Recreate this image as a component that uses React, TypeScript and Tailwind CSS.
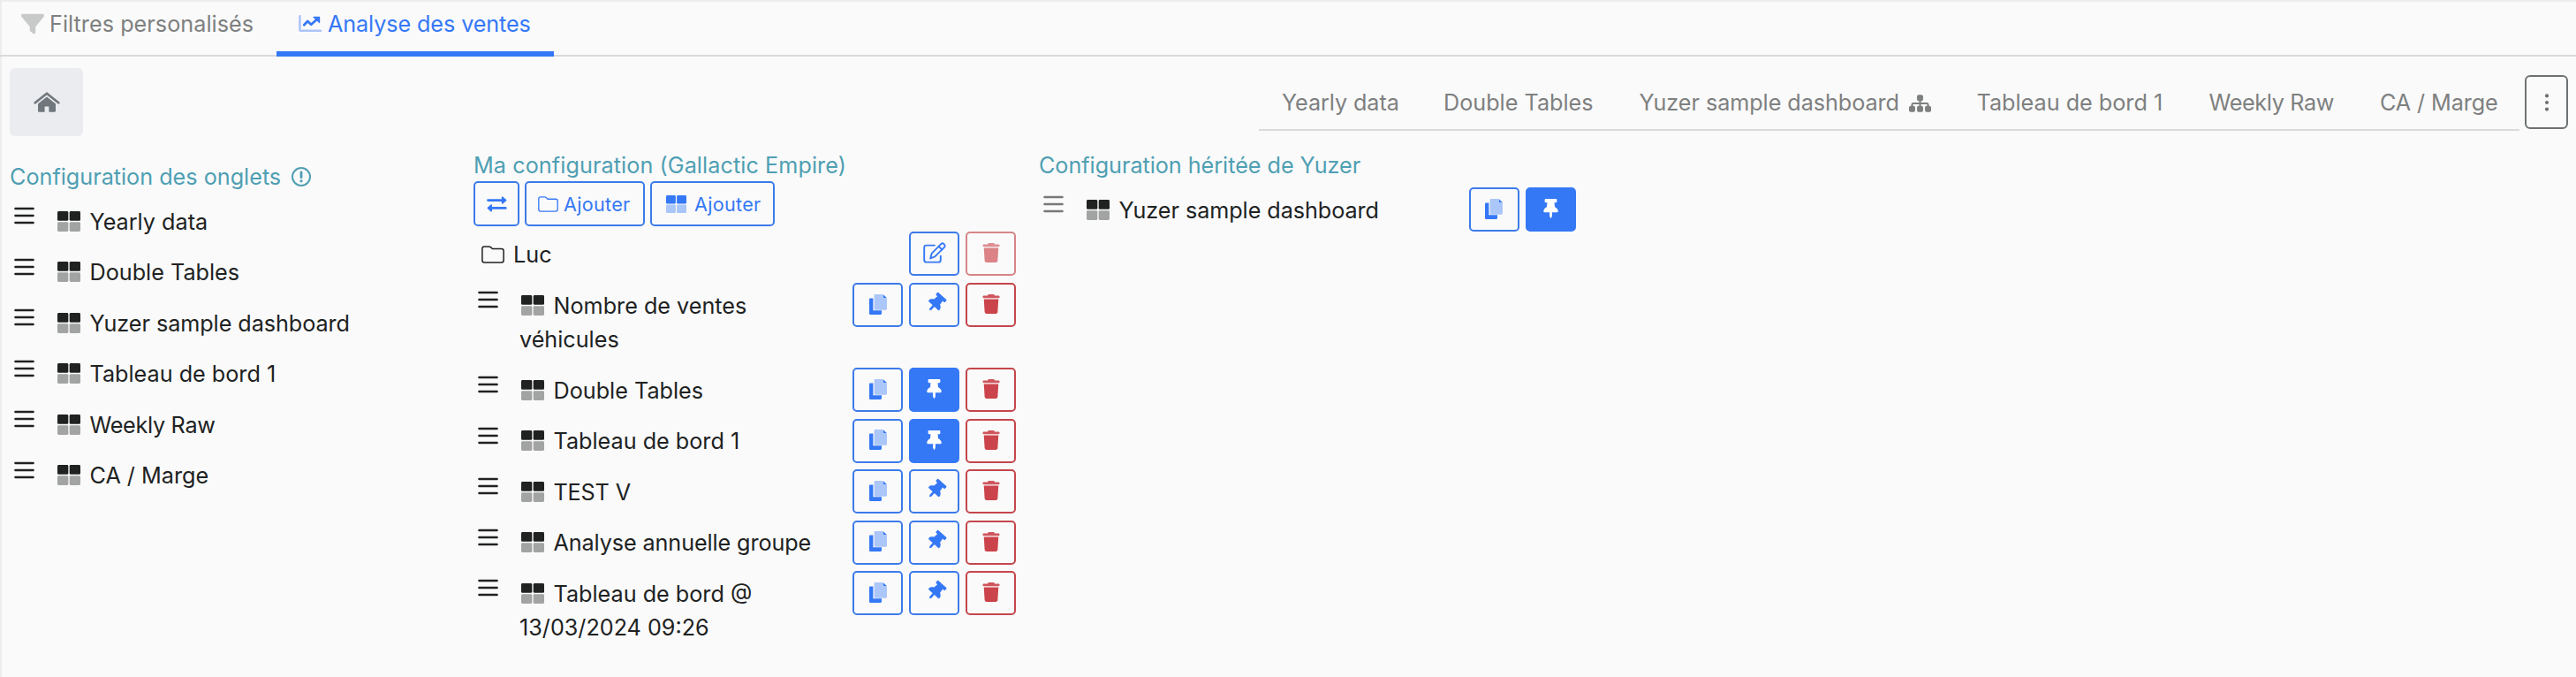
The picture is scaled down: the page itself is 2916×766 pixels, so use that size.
import React from "react";
import clsx from "clsx";
import { FaFilter, FaSitemap } from "react-icons/fa6";
import { FaThumbtack } from "react-icons/fa";

function GridIcon({ className }: { className?: string }) {
  return (
    <svg viewBox="0 0 26 23" preserveAspectRatio="none" className={className} fill="currentColor">
      <rect x="0" y="0" width="12.3" height="10.8" rx="1.4" />
      <rect x="13.7" y="0" width="12.3" height="10.8" rx="1.4" />
      <g opacity="0.4">
        <rect x="0" y="12.2" width="12.3" height="10.8" rx="1.4" />
        <rect x="13.7" y="12.2" width="12.3" height="10.8" rx="1.4" />
      </g>
    </svg>
  );
}

function FolderIcon({ className }: { className?: string }) {
  return (
    <svg viewBox="0 0 26 20" className={className} fill="none" stroke="currentColor" strokeWidth="1.5" strokeLinejoin="round">
      <path d="M3.2 0.9H8.6C9.3 0.9 9.9 1.2 10.4 1.6L12.4 3.5H22.6C24 3.5 25.1 4.5 25.1 5.8V16.6C25.1 18 24 19.1 22.6 19.1H3.2C1.9 19.1 0.9 18 0.9 16.6V3.3C0.9 2 1.9 0.9 3.2 0.9Z" />
    </svg>
  );
}

function BarsIcon({ className }: { className?: string }) {
  return (
    <svg viewBox="0 0 23 20" className={className} stroke="currentColor" strokeWidth="2.4" strokeLinecap="round">
      <path d="M1.4 2H21.6M1.4 10H21.6M1.4 18H21.6" />
    </svg>
  );
}

function EditIcon() {
  return (
    <svg viewBox="0 0 26 24" className="h-6 w-[26px]" fill="none" stroke="currentColor" strokeWidth="1.9" strokeLinecap="round" strokeLinejoin="round">
      <path d="M13 3.6H3.6C2.2 3.6 1.2 4.6 1.2 6V20.2C1.2 21.6 2.2 22.6 3.6 22.6H17.4C18.8 22.6 19.8 21.6 19.8 20.2V15.6" />
      <path d="M20.2 2.1C21.2 1.1 22.6 1.1 23.6 2.1C24.9 3.3 24.9 4.8 23.9 5.8L13.2 16.4L8.2 18.4L9.8 12.6Z" />
      <path d="M17.6 4.8L21.3 8.4" />
    </svg>
  );
}

function TrashIcon() {
  return (
    <svg viewBox="0 0 448 512" className="h-[22px] w-5" fill="currentColor">
      <path opacity="0.9" d="M135.2 17.7L128 32H32C14.3 32 0 46.3 0 64S14.3 96 32 96H416c17.7 0 32-14.3 32-32s-14.3-32-32-32H320l-7.2-14.3C307.4 6.8 296.3 0 284.2 0H163.8c-12.1 0-23.2 6.8-28.6 17.7z" />
      <path d="M32 128L53.2 467c1.6 25.3 22.6 45 47.9 45H346.9c25.3 0 46.3-19.7 47.9-45L416 128z" />
    </svg>
  );
}

function CopyIcon() {
  return (
    <svg viewBox="0 0 20 23" className="h-[23px] w-5" fill="currentColor">
      <path d="M1 4.6H4.4V18.2H14V21.6C14 22.4 13.5 23 12.8 23H1C0.4 23 0 22.5 0 21.8V5.8C0 5.1 0.4 4.6 1 4.6Z" />
      <path opacity="0.4" d="M6.6 0H15.2V3.2C15.2 4 15.7 4.6 16.6 4.6H20V16.6C20 17.3 19.5 17.8 18.8 17.8H6.8C6.1 17.8 5.6 17.3 5.6 16.6V1.2C5.6 0.5 6 0 6.6 0Z" />
      <path d="M15.6 0L20 4.2H16.6C16 4.2 15.6 3.8 15.6 3.2Z" />
    </svg>
  );
}

function ChartIcon() {
  return (
    <svg viewBox="0 0 26 20" className="h-5 w-[26px]" fill="none">
      <path d="M1.4 1.2V16.2C1.4 17.2 2 17.8 3 17.8H24.8" stroke="#aec5fa" strokeWidth="2.6" strokeLinecap="round" />
      <path d="M6.2 11.2L10.2 7L14.2 10.8L20.6 4.9" stroke="#3578f6" strokeWidth="2.7" strokeLinejoin="round" strokeLinecap="round" />
      <path d="M17 1.8H23.6Q24.2 1.8 24.2 2.4V8.8Q24 9.6 23.3 9L16.6 2.8Q16.2 2 17 1.8Z" fill="#3578f6" />
    </svg>
  );
}

function SwapIcon() {
  return (
    <svg viewBox="0 0 23 18" className="h-[18px] w-[23px]" fill="none" stroke="currentColor" strokeWidth="2.6" strokeLinecap="round" strokeLinejoin="round">
      <path d="M1.4 4.6H20M3 13.4H21.4" />
      <path d="M17.6 1.2V8L21.6 4.6ZM5.2 10V16.8L1.4 13.4Z" fill="currentColor" strokeWidth="1.6" />
    </svg>
  );
}

function HomeIcon() {
  return (
    <svg viewBox="0 0 30 23" className="h-[23px] w-[30px] text-[#70777d]">
      <path d="M1.8 12.3L15 1.7L28.2 12.3" fill="none" stroke="currentColor" strokeWidth="2.7" strokeLinecap="round" strokeLinejoin="round" />
      <path d="M15 5.6L25 13.6V21.4Q25 22.8 23.6 22.8H17.4V16.4H12.6V22.8H6.4Q5 22.8 5 21.4V13.6Z" fill="currentColor" />
    </svg>
  );
}

function InfoIcon() {
  return (
    <svg viewBox="0 0 22 22" className="h-[22px] w-[22px]" fill="none" stroke="currentColor">
      <circle cx="11" cy="11" r="10" strokeWidth="2" />
      <path d="M11 6V11.8" strokeWidth="2.8" strokeLinecap="round" />
      <circle cx="11" cy="15.8" r="1" fill="currentColor" strokeWidth="1.2" />
    </svg>
  );
}

function DotsIcon() {
  return (
    <svg viewBox="0 0 6 20" className="h-5 w-1.5" fill="currentColor">
      <circle cx="3" cy="2.4" r="2.1" />
      <circle cx="3" cy="10" r="2.1" />
      <circle cx="3" cy="17.6" r="2.1" />
    </svg>
  );
}

const squareButton = "flex h-[50px] w-[57px] items-center justify-center rounded-[5px] border-2";

function CopyButton() {
  return (
    <button className={clsx(squareButton, "border-[#3d7be9] pb-0.5 text-[#3578f6]")}>
      <CopyIcon />
    </button>
  );
}

function PinButton({ pinned }: { pinned?: boolean }) {
  return (
    <button
      className={clsx(
        squareButton,
        pinned ? "border-[#3578f6] bg-[#3578f6] pb-0.5 text-white" : "border-[#3d7be9] pb-1 pl-[3px] text-[#3578f6]"
      )}
    >
      <FaThumbtack className={clsx("h-[22px] w-[17px]", !pinned && "rotate-[42deg]")} />
    </button>
  );
}

function TrashButton({ disabled }: { disabled?: boolean }) {
  return (
    <button className={clsx(squareButton, "border-[#c4474c] pb-0.5 text-[#cb444b]", disabled && "opacity-65")}>
      <TrashIcon />
    </button>
  );
}

interface RowProps {
  label: string;
  handle?: string;
  height?: string;
  tracking?: string;
  children?: React.ReactNode;
}

function Row({ label, handle = "text-[#202222]", height = "h-[57.5px]", tracking, children }: RowProps) {
  return (
    <li className={clsx("flex items-start", height)}>
      <div className="w-[52px] shrink-0 pt-[9px] pl-[4.5px]">
        <BarsIcon className={clsx("h-5 w-[23px]", handle)} />
      </div>
      <p className={clsx("w-[350px] pt-[6.5px]", tracking)}>
        <GridIcon className="mr-[10.5px] ml-[2px] inline-block h-[23px] w-[26px] align-[-2px]" />
        {label}
      </p>
      <div className="ml-auto flex gap-[7px]">{children}</div>
    </li>
  );
}

const title = "whitespace-nowrap text-[#4f9fb3]";

const tabs = [
  { label: "Yearly data", box: "w-[184px] pl-[26px]", tracking: "tracking-[-0.08px]" },
  { label: "Double Tables", box: "w-[220.5px] pl-[25px]", tracking: "" },
  { label: "Yuzer sample dashboard", box: "w-[382px] pl-[26px]", tracking: "tracking-[-0.06px]", shared: true },
  { label: "Tableau de bord 1", box: "w-[263px] pl-[26px]", tracking: "" },
  { label: "Weekly Raw", box: "w-[194px] pl-[26px]", tracking: "tracking-[-0.35px]" },
  { label: "CA / Marge", box: "w-[183.5px] pl-[25.5px]", tracking: "tracking-[-0.1px]" },
];

const ownDashboards = [
  { label: "Nombre de ventes véhicules", height: "h-[96px]" },
  { label: "Double Tables", pinned: true },
  { label: "Tableau de bord 1", pinned: true },
  { label: "TEST V", tracking: "tracking-[-0.15px]" },
  { label: "Analyse annuelle groupe", tracking: "tracking-[-0.1px]" },
  { label: "Tableau de bord @ 13/03/2024 09:26", height: "h-[96px]" },
];

export default function App() {
  return (
    <div className="h-[766px] w-[2916px] overflow-hidden bg-[#fafafa] font-['Inter',sans-serif] text-[25.2px] leading-[38.8px] text-[#202222] shadow-[inset_2px_2px_0_#ededed]">
      <nav className="flex h-16 bg-[linear-gradient(#d8dadb,#d8dadb)] bg-[length:100%_2px] bg-bottom bg-no-repeat">
        <div className="flex w-[313px] gap-[6px] pt-2 pl-6 text-[#7e8080]">
          <FaFilter className="mt-1.5 h-[26px] w-[26px] text-[#c8caca]" />
          <span className="tracking-[0.04px] whitespace-nowrap">Filtres personalisés</span>
        </div>
        <div className="flex w-[314px] gap-[7px] border-b-6 border-[#3578f6] pt-2 pl-[25px] text-[#3578f6]">
          <div className="pt-[9px]">
            <ChartIcon />
          </div>
          <span className="tracking-[-0.1px] whitespace-nowrap">Analyse des ventes</span>
        </div>
      </nav>

      <div className="flex h-[90px] items-start justify-between pt-[13px] pr-[9px] pl-[11px]">
        <button className="flex h-[77px] w-[83px] items-center justify-center rounded-md bg-[#ebecef]">
          <HomeIcon />
        </button>
        <div className="flex items-start gap-[6px]">
          <div className="flex h-[71px] border-b-2 border-[#d8dadb] pt-[19.5px] text-[#7e8080]">
            {tabs.map((t) => (
              <div key={t.label} className={clsx("flex gap-[11px] whitespace-nowrap", t.box, t.tracking)}>
                {t.label}
                {t.shared && <FaSitemap className="mt-[8px] h-[24px] w-[25px]" />}
              </div>
            ))}
          </div>
          <button className="mt-2 flex h-[61px] w-[49px] items-center justify-center rounded-md border-2 border-[#6d7173] text-[#6d7173]">
            <DotsIcon />
          </button>
        </div>
      </div>

      <main className="flex items-start pl-[11px]">
        <section className="w-[525px] pt-[27px]">
          <h2 className={clsx(title, "flex h-[44px] gap-[12px]")}>
            Configuration des onglets
            <span className="pt-[8px]">
              <InfoIcon />
            </span>
          </h2>
          <ul>
            <Row label="Yearly data" />
            <Row label="Double Tables" />
            <Row label="Yuzer sample dashboard" tracking="tracking-[-0.06px]" />
            <Row label="Tableau de bord 1" />
            <Row label="Weekly Raw" tracking="tracking-[-0.3px]" />
            <Row label="CA / Marge" />
          </ul>
        </section>

        <section className="w-[614px] pt-[14px]">
          <h2 className={clsx(title, "h-[37px] tracking-[0.08px]")}>Ma configuration (Gallactic Empire)</h2>
          <div className="flex h-[57px] gap-1.5 text-[21.6px] tracking-[0.3px] text-[#3578f6]">
            <button className="flex h-[51px] w-[52px] items-center justify-center rounded-[5px] border-2 border-[#3d7be9]">
              <SwapIcon />
            </button>
            <button className="flex h-[51px] w-[136px] items-center gap-[6px] rounded-[5px] border-2 border-[#3d7be9] pl-[13px]">
              <FolderIcon className="h-[18px] w-[23px]" />
              <span className="pt-[2px]">Ajouter</span>
            </button>
            <button className="flex h-[51px] w-[141px] items-center gap-[9px] rounded-[5px] border-2 border-[#3d7be9] pl-4">
              <GridIcon className="h-[20px] w-[23px]" />
              <span className="pt-[2px]">Ajouter</span>
            </button>
          </div>
          <div className="flex h-[58px] items-start pl-[9px]">
            <FolderIcon className="mt-4 h-5 w-[26px]" />
            <span className="pt-[6.5px] pl-[10px]">Luc</span>
            <div className="ml-auto flex gap-[7px]">
              <button className={clsx(squareButton, "border-[#3d7be9] pb-0.5 text-[#3578f6]")}>
                <EditIcon />
              </button>
              <TrashButton disabled />
            </div>
          </div>
          <ul>
            {ownDashboards.map((d) => (
              <Row key={d.label} label={d.label} height={d.height} tracking={d.tracking}>
                <CopyButton />
                <PinButton pinned={d.pinned} />
                <TrashButton />
              </Row>
            ))}
          </ul>
        </section>

        <section className="ml-[26px] w-[607.5px] pt-[14px]">
          <h2 className={clsx(title, "h-[44px] tracking-[-0.03px]")}>Configuration héritée de Yuzer</h2>
          <ul>
            <Row label="Yuzer sample dashboard" handle="text-[#77797a]" tracking="tracking-[-0.06px]">
              <CopyButton />
              <PinButton pinned />
            </Row>
          </ul>
        </section>
      </main>
    </div>
  );
}
